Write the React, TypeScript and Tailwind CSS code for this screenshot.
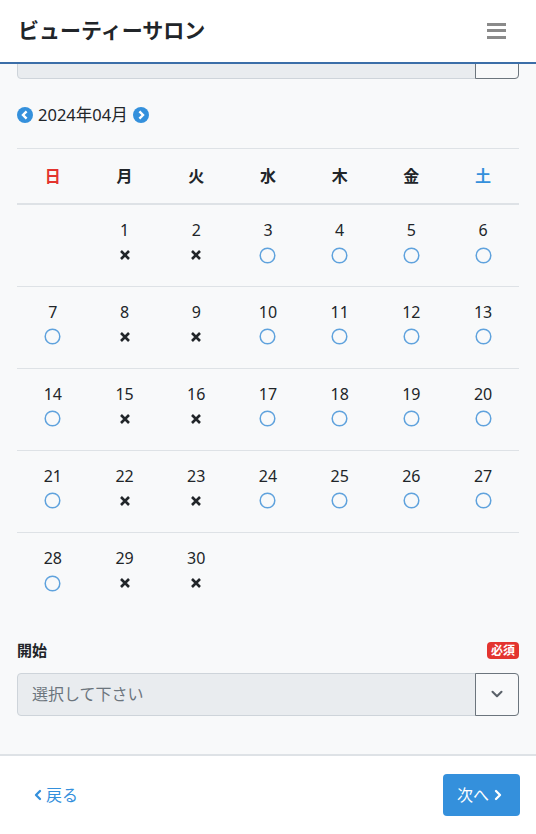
import { ChevronLeft, ChevronRight, ChevronDown } from 'lucide-react';

type Mark = 'x' | 'o' | null;

const weekdays = [
  { label: '日', color: 'text-[#e3342f]' },
  { label: '月', color: 'text-[#212529]' },
  { label: '火', color: 'text-[#212529]' },
  { label: '水', color: 'text-[#212529]' },
  { label: '木', color: 'text-[#212529]' },
  { label: '金', color: 'text-[#212529]' },
  { label: '土', color: 'text-[#3490dc]' },
];

// closed on Mon / Tue
function markFor(day: number, col: number): Mark {
  return col === 1 || col === 2 ? 'x' : 'o';
}

function buildWeeks() {
  const weeks: { day: number | null; mark: Mark }[][] = [];
  let week: { day: number | null; mark: Mark }[] = [{ day: null, mark: null }];
  for (let d = 1; d <= 30; d++) {
    week.push({ day: d, mark: markFor(d, week.length) });
    if (week.length === 7) {
      weeks.push(week);
      week = [];
    }
  }
  while (week.length < 7) week.push({ day: null, mark: null });
  weeks.push(week);
  return weeks;
}

function CircleChevron({ dir }: { dir: 'left' | 'right' }) {
  return (
    <svg width="16" height="16" viewBox="0 0 16 16">
      <circle cx="8" cy="8" r="8" fill="#3490dc" />
      {dir === 'left' ? (
        <path d="M9.6 4.4 6 8l3.6 3.6" stroke="#fff" strokeWidth="2.4" fill="none" />
      ) : (
        <path d="M6.4 4.4 10 8l-3.6 3.6" stroke="#fff" strokeWidth="2.4" fill="none" />
      )}
    </svg>
  );
}

function Cross() {
  return (
    <svg width="12" height="12" viewBox="0 0 12 12">
      <path d="M2 2l8 8M10 2l-8 8" stroke="#212529" strokeWidth="2.6" />
    </svg>
  );
}

function Ring() {
  return (
    <svg width="17" height="17" viewBox="0 0 17 17">
      <circle cx="8.5" cy="8.5" r="7.3" stroke="#5fa2dd" strokeWidth="1.5" fill="none" />
    </svg>
  );
}

function SelectBox({ placeholder }: { placeholder?: string }) {
  return (
    <div className="flex h-[43px] rounded border border-[#ced4da] bg-[#e9ecef]">
      <div className="flex flex-1 items-center pl-[14px] text-[16px] text-[#6c757d]">{placeholder}</div>
      <div className="-my-px -mr-px flex w-[44px] items-center justify-center rounded-r border border-[#6c757d] bg-[#f8f9fa]">
        {placeholder && <ChevronDown size={18} strokeWidth={2.75} className="text-[#5a6169]" />}
      </div>
    </div>
  );
}

export default function App() {
  const weeks = buildWeeks();

  return (
    <div className="flex h-[834px] flex-col overflow-hidden bg-[#f8f9fa] font-['Noto_Sans','Noto_Sans_CJK_JP',sans-serif] text-[#212529]">
      {/* Header */}
      <header className="flex h-[64px] shrink-0 items-center justify-between border-b-2 border-[#3b6ea8] bg-white pl-[18px] pr-[30px]">
        <h1 className="text-[21px] font-bold">ビューティーサロン</h1>
        <div className="flex w-[19px] flex-col gap-[3.5px] pb-[1px]">
          <span className="h-[3px] bg-[#8a8a8a]" />
          <span className="h-[3px] bg-[#8a8a8a]" />
          <span className="h-[3px] bg-[#8a8a8a]" />
        </div>
      </header>

      {/* Body */}
      <main className="flex-1 overflow-hidden px-[17px]">
        <div className="-mt-[28px]">
          <SelectBox />
        </div>

        <div className="mt-[24px] flex items-center gap-[5px] text-[16.5px]">
          <CircleChevron dir="left" />
          <span>2024年04月</span>
          <CircleChevron dir="right" />
        </div>

        <table className="mt-[20px] w-full table-fixed border-collapse">
          <thead>
            <tr className="h-[56px] border-t border-b-2 border-[#dee2e6]">
              {weekdays.map((w) => (
                <th key={w.label} className={`text-[16px] font-bold ${w.color}`}>
                  {w.label}
                </th>
              ))}
            </tr>
          </thead>
          <tbody>
            {weeks.map((week, i) => (
              <tr key={i} className={`h-[82px] ${i < weeks.length - 1 ? 'border-b border-[#dee2e6]' : ''}`}>
                {week.map((c, j) => (
                  <td key={j} className="pb-[7px] text-center align-middle">
                    {c.day && (
                      <div className="flex flex-col items-center">
                        <span className="text-[16px] leading-[20px]">{c.day}</span>
                        <span className="mt-[6px] flex h-[18px] items-center">
                          {c.mark === 'x' ? <Cross /> : <Ring />}
                        </span>
                      </div>
                    )}
                  </td>
                ))}
              </tr>
            ))}
          </tbody>
        </table>

        <div className="mt-[25px] flex items-center justify-between">
          <span className="text-[15px] font-bold">開始</span>
          <span className="rounded bg-[#e3342f] px-[4px] text-[12px] leading-[17px] font-bold text-white">必須</span>
        </div>
        <div className="mt-[11px]">
          <SelectBox placeholder="選択して下さい" />
        </div>
      </main>

      {/* Footer */}
      <footer className="flex h-[80px] shrink-0 items-center justify-between border-t-2 border-[#dee2e6] bg-white pl-[30px] pr-[16px]">
        <a className="flex items-center text-[16px] text-[#3490dc]">
          <ChevronLeft size={16} strokeWidth={3.5} />
          <span>戻る</span>
        </a>
        <button className="flex h-[42px] w-[77px] items-center justify-center gap-[1px] rounded bg-[#3490dc] text-[16px] text-white">
          <span>次へ</span>
          <ChevronRight size={16} strokeWidth={3.5} />
        </button>
      </footer>
    </div>
  );
}
